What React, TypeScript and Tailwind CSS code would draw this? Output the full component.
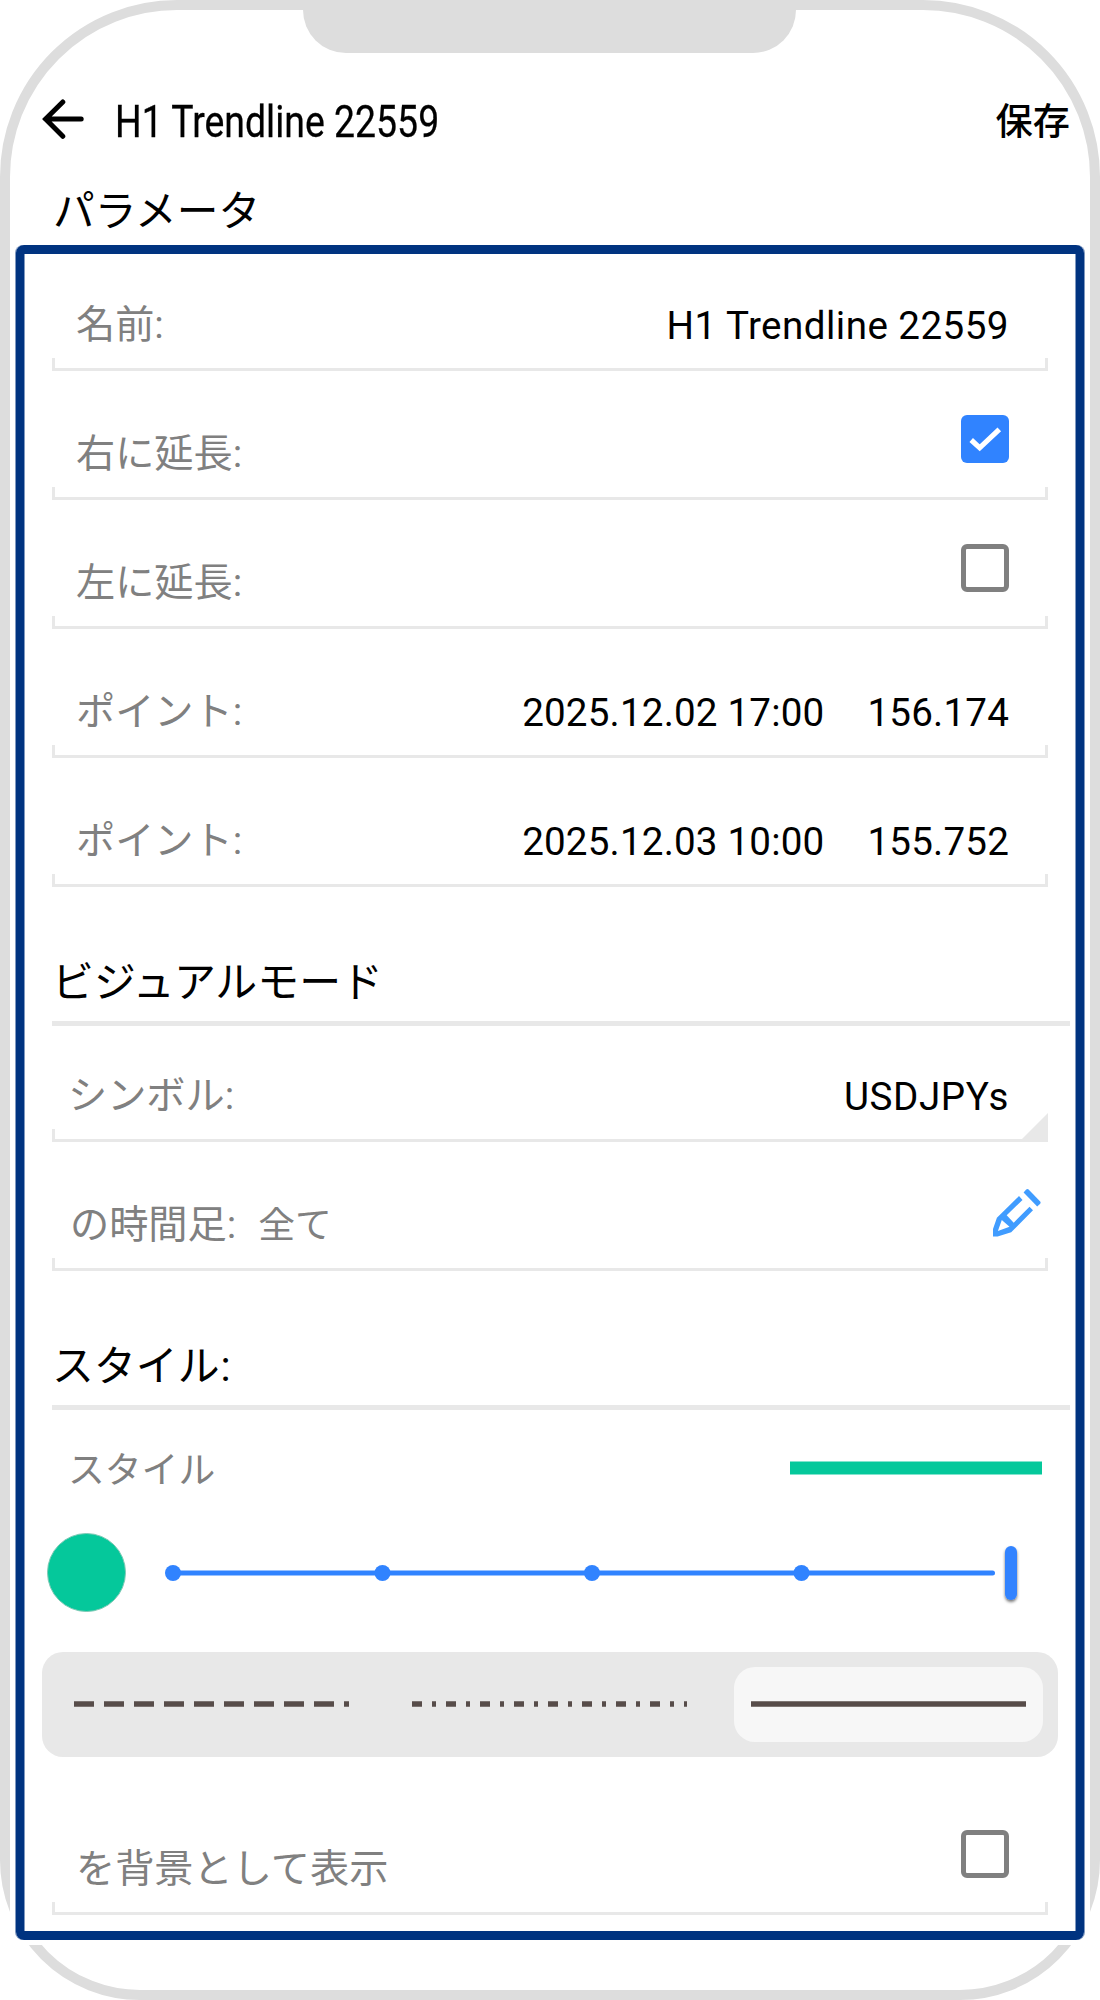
import type { ReactNode } from "react";
import { clsx } from "clsx";

function Checkbox({ checked = false }: { checked?: boolean }) {
  if (checked) {
    return (
      <span className="mb-6 flex size-12 rounded-[6px] bg-[#3083ff]">
        <svg width="48" height="48" viewBox="0 0 48 48" fill="none" aria-hidden="true">
          <path d="M10.2 25 18.7 32.8 38.3 14.3" stroke="#fff" strokeWidth="5.2" />
        </svg>
      </span>
    );
  }

  return <span className="mb-6 size-12 rounded-[6px] border-[5px] border-[#808080]" />;
}

function FieldRow({
  label,
  height = "h-[129px]",
  inset = "pl-6",
  labelOffset = "mb-[13px]",
  select = false,
  children,
}: {
  label: ReactNode;
  height?: string;
  inset?: string;
  labelOffset?: string;
  select?: boolean;
  children?: ReactNode;
}) {
  return (
    <div className={clsx("relative ml-7 mr-7 flex flex-col", height)}>
      <div className={clsx("flex flex-1 items-end justify-between pr-[39px]", inset)}>
        <span className={clsx("text-[39.2px] leading-10 text-[#808080]", labelOffset)}>{label}</span>
        {children}
      </div>
      <div
        className={clsx(
          "h-[13px] border-b-[3px] border-l-[3px] border-[#e8e8e8]",
          !select && "border-r-[3px]"
        )}
      />
      {select && (
        <svg className="absolute bottom-0 right-0" width="29" height="29" viewBox="0 0 29 29" aria-hidden="true">
          <path d="M29 0V29H0z" fill="#e8e8e8" />
        </svg>
      )}
    </div>
  );
}

function Value({ tracking = "tracking-[0.18px]", children }: { tracking?: string; children: ReactNode }) {
  return (
    <span className={clsx("mb-3 whitespace-pre text-[38.6px] leading-10 text-black", tracking)}>
      {children}
    </span>
  );
}

function SectionTitle({ children }: { children: ReactNode }) {
  return (
    <h2 className="ml-7 mr-1.5 flex h-[139px] items-end border-b-[5px] border-[#e8e8e8] pb-[17px] text-[41.9px] leading-[42px] text-black">
      {children}
    </h2>
  );
}

function PencilIcon() {
  return (
    <svg
      className="-mr-8 mb-[21px]"
      width="48"
      height="48"
      viewBox="0 0 48 48"
      fill="#409cff"
      fillRule="evenodd"
      aria-hidden="true"
    >
      <path d="M0 40 3.9 28.7 26 7l3.5 4-15.8 15.3 7 7.4L36.5 17.7l3.5 3.6-21.8 22L4.6 47.5H0zM8.8 31 4.9 42l11.6-4.3z" />
      <path d="M30.6 3.4 33.2.6Q34.4-.4 35.6.4L47.2 12.5Q48 13.4 47.2 14.8L44.2 17.4z" />
    </svg>
  );
}

const stops = [6, 215.5, 425, 634.5];

function WidthSlider() {
  return (
    <svg className="ml-[41px] overflow-visible" width="860" height="79" viewBox="0 0 860 79" aria-hidden="true">
      <defs>
        <filter id="thumb-shadow" x="-100%" y="-20%" width="300%" height="150%">
          <feDropShadow dx="0" dy="2" stdDeviation="1.8" floodColor="#000" floodOpacity="0.55" />
        </filter>
      </defs>
      <line x1="6" y1="40" x2="825.5" y2="40" stroke="#3083ff" strokeWidth="5" strokeLinecap="round" />
      {stops.map((x) => (
        <circle key={x} cx={x} cy="40" r="8" fill="#3083ff" />
      ))}
      <rect x="838" y="13" width="12" height="54" rx="6" fill="#3083ff" filter="url(#thumb-shadow)" />
    </svg>
  );
}

function LineStyle({ dash }: { dash?: string }) {
  return (
    <svg className="mb-px" width="275" height="6" viewBox="0 0 275 6" aria-hidden="true">
      <line x1="0" y1="3" x2="275" y2="3" stroke="#574c49" strokeWidth="5.4" strokeDasharray={dash} />
    </svg>
  );
}

export default function App() {
  return (
    <div
      lang="ja"
      className="h-[2000px] w-[1100px] rounded-b-[140px] rounded-t-[177px] border-[10px] border-[#ddd] bg-white font-['Roboto','Noto_Sans_CJK_JP',sans-serif]"
    >
      <div className="ml-[293px] h-[43px] w-[493px] rounded-b-[43px] bg-[#ddd]" />

      <header className="flex h-[132px] items-center pl-8 pr-5">
        <svg width="42" height="40" viewBox="0 0 42 40" fill="none" stroke="#000" strokeWidth="5" strokeLinecap="round" aria-hidden="true">
          <path d="M20.8 2.9 3.6 20.1 20.8 37.3M3.6 20.1H39.2" />
        </svg>
        <h1 className="ml-[31px] w-[330px] origin-left scale-x-[0.85] whitespace-nowrap pt-1.5 text-[44px] leading-[52px] text-black [-webkit-text-stroke:0.3px_#000]">
          H1 Trendline 22559
        </h1>
        <button type="button" className="ml-auto pt-1.5 text-[37.2px] font-medium leading-[52px] text-black">
          保存
        </button>
      </header>

      <h2 className="h-[55px] pl-[43px] text-[41.7px] leading-[54px] text-black">パラメータ</h2>

      <div className="bg-white px-1.5 py-[5px]">
        <section className="h-[1695px] rounded-[8px] border-x-8 border-y-[9px] border-[#003380] shadow-[-1px_0_0_#8099c0,1px_0_0_#8099c0,inset_1px_0_0_#8099c0,inset_-1px_0_0_#8099c0]">
          <FieldRow label="名前:" height="h-[117px]">
            <Value tracking="tracking-[0.45px]">H1 Trendline 22559</Value>
          </FieldRow>
          <FieldRow label="右に延長:">
            <Checkbox checked />
          </FieldRow>
          <FieldRow label="左に延長:">
            <Checkbox />
          </FieldRow>
          <FieldRow label="ポイント:">
            <div className="flex gap-[43px]">
              <Value>2025.12.02 17:00</Value>
              <Value>156.174</Value>
            </div>
          </FieldRow>
          <FieldRow label="ポイント:">
            <div className="flex gap-[43px]">
              <Value>2025.12.03 10:00</Value>
              <Value>155.752</Value>
            </div>
          </FieldRow>

          <SectionTitle>ビジュアルモード</SectionTitle>
          <FieldRow label="シンボル:" height="h-[116px]" inset="pl-4" select>
            <Value tracking="tracking-[0.6px]">USDJPYs</Value>
          </FieldRow>
          <FieldRow
            inset="pl-[18px]"
            labelOffset="mb-3"
            label={
              <>
                の時間足:<span className="ml-[22px] text-[36.8px]">全て</span>
              </>
            }
          >
            <PencilIcon />
          </FieldRow>

          <SectionTitle>
            スタイル<span className="ml-px">:</span>
          </SectionTitle>
          <div className="flex h-[123px] items-start justify-between pl-11 pr-[34px]">
            <span className="pt-[41px] text-[36.8px] leading-10 text-[#808080]">スタイル</span>
            <span className="mt-[51px] h-3.5 w-[252px] border-y border-[#82e4cd] bg-[#05c89b]" />
          </div>
          <div className="flex h-[79px] items-center pl-[23px]">
            <span className="size-[79px] rounded-full border border-[#7fc9b5] bg-[#05c89b]" />
            <WidthSlider />
          </div>
          <div className="ml-[18px] mr-[18px] mt-10 flex h-[105px] items-center rounded-[21px] bg-[#e8e8e8] pl-8 pr-[15px]">
            <LineStyle dash="20 10" />
            <div className="ml-[63px]">
              <LineStyle dash="10 10 4 10" />
            </div>
            <div className="ml-auto flex h-[75px] w-[309px] items-center justify-center rounded-[21px] bg-[#f7f7f7]">
              <LineStyle />
            </div>
          </div>
          <FieldRow label="を背景として表示" height="h-[158px]">
            <Checkbox />
          </FieldRow>
        </section>
      </div>
    </div>
  );
}
